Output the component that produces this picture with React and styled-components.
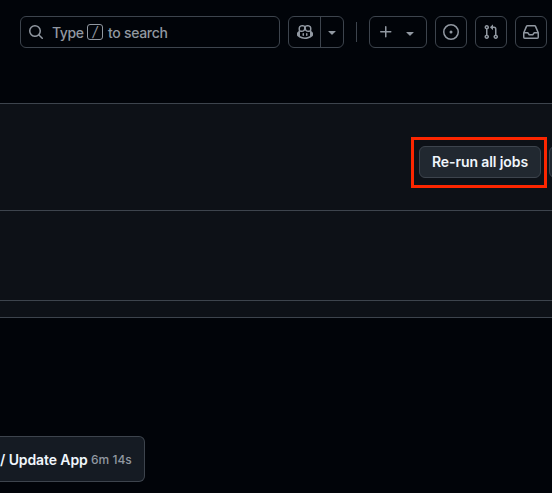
import React from "react";
import styled, { createGlobalStyle } from "styled-components";

const GlobalStyle = createGlobalStyle`
  *, *::before, *::after { box-sizing: border-box; }
  body {
    margin: 0;
    background: #010409;
    color: #f0f6fc;
    font-family: Inter, "Liberation Sans", sans-serif;
    font-size: 14px;
    overflow: hidden;
  }
`;

const Page = styled.div`
  width: 552px;
  height: 493px;
  display: flex;
  flex-direction: column;
  overflow: hidden;
  background: #010409;
`;

const Header = styled.header`
  display: flex;
  align-items: flex-start;
  gap: 8px;
  height: 103px;
  flex: none;
  padding: 16px 0 0 20px;
  color: #9198a1;
`;

const Search = styled.div`
  display: flex;
  align-items: center;
  flex: none;
  width: 260px;
  height: 32px;
  padding-left: 7px;
  border: 1px solid #3d444d;
  border-radius: 6px;
  white-space: pre;
`;

const SearchText = styled.span`
  width: ${(p) => p.$width}px;
  margin-left: ${(p) => p.$gap}px;
  line-height: 20px;
  letter-spacing: ${(p) => p.$spacing}px;
  font-weight: 500;
  padding-top: 1px;
`;

const Key = styled.kbd`
  display: flex;
  align-items: center;
  justify-content: center;
  width: 16px;
  height: 16px;
  border: 1px solid #9198a1;
  border-radius: 3px;
  font: italic 14px/14px Inter, sans-serif;
`;

const Button = styled.div`
  display: flex;
  align-items: center;
  justify-content: center;
  flex: none;
  width: ${(p) => p.$width || 32}px;
  height: 32px;
  gap: ${(p) => p.$gap || 0}px;
  border: 1px solid #3d444d;
  border-radius: 6px;
`;

const Segment = styled.div`
  display: flex;
  align-items: center;
  justify-content: center;
  width: ${(p) => p.$width}px;
  height: 100%;
  & + & { border-left: 1px solid #3d444d; }
`;

const Divider = styled.div`
  width: 1px;
  height: 20px;
  margin: 6px 4px 0;
  background: #3d444d;
`;

const Icon = styled.svg`
  display: block;
  flex: none;
  width: 16px;
  height: 16px;
  fill: currentColor;
  margin-top: ${(p) => p.$drop || 0}px;
`;

const Toolbar = styled.section`
  display: flex;
  align-items: flex-start;
  flex: none;
  height: 107px;
  padding: 33px 0 0 411px;
  border-top: 1px solid #3d444d;
  background: #0d1117;
`;

const Highlight = styled.div`
  flex: none;
  width: 136px;
  height: 51px;
  padding: 6px 5px;
  border: 3px solid #fb2600;
`;

const Action = styled.button`
  display: block;
  flex: none;
  width: ${(p) => p.$width}px;
  height: 32px;
  margin: ${(p) => p.$margin || 0};
  padding: 0;
  border: 1px solid #3d444d;
  border-radius: 6px;
  background: #212830;
  color: #f0f6fc;
  font: 600 14px/30px Inter, sans-serif;
  letter-spacing: -0.1px;
  white-space: nowrap;
`;

const Summary = styled.section`
  flex: none;
  height: 90px;
  border-top: 1px solid #3d444d;
  background: #0d1117;
`;

const Strip = styled.div`
  flex: none;
  height: 18px;
  border: solid #3d444d;
  border-width: 1px 0;
  background: #0d1117;
`;

const Graph = styled.main`
  flex: 1;
  padding-top: 118px;
`;

const Job = styled.div`
  display: flex;
  align-items: center;
  width: 145px;
  height: 46px;
  padding-top: 1px;
  border: 1px solid #3d444d;
  border-left: 0;
  border-radius: 0 6px 6px 0;
  background: #151b23;
  white-space: nowrap;
`;

const JobName = styled.span`
  width: 91px;
  font-weight: 600;
  letter-spacing: -0.1px;
`;

const Duration = styled.span`
  color: #9198a1;
  font-size: 12px;
  font-weight: 500;
`;

const shapes = {
  search: "M10.68 11.74a6 6 0 0 1-7.922-8.982 6 6 0 0 1 8.982 7.922l3.04 3.04a.749.749 0 0 1-.326 1.275.749.749 0 0 1-.734-.215ZM11.5 7a4.499 4.499 0 1 0-8.997 0A4.499 4.499 0 0 0 11.5 7Z",
  copilot: "M7.998 15.035c-4.562 0-7.873-2.914-7.998-3.749V9.338c.085-.628.677-1.686 1.588-2.065.013-.07.024-.143.036-.218.029-.183.06-.384.126-.612-.201-.508-.254-1.084-.254-1.656 0-.87.128-1.769.693-2.484.579-.733 1.494-1.124 2.724-1.261 1.206-.134 2.262.034 2.944.765.05.053.096.108.139.165.044-.057.094-.112.143-.165.682-.731 1.738-.899 2.944-.765 1.23.137 2.145.528 2.724 1.261.566.715.693 1.614.693 2.484 0 .572-.053 1.148-.254 1.656.066.228.098.429.126.612.012.076.024.148.037.218.924.385 1.522 1.471 1.591 2.095v1.872c0 .766-3.351 3.795-8.002 3.795Zm0-1.485c2.28 0 4.584-1.11 5.002-1.433V7.862l-.023-.116c-.49.21-1.075.291-1.727.291-1.146 0-2.059-.327-2.71-.991A3.222 3.222 0 0 1 8 6.303a3.24 3.24 0 0 1-.544.743c-.65.664-1.563.991-2.71.991-.652 0-1.236-.081-1.727-.291l-.023.116v4.255c.419.323 2.722 1.433 5.002 1.433ZM6.762 2.83c-.193-.206-.637-.413-1.682-.297-1.019.113-1.479.404-1.713.7-.247.312-.369.789-.369 1.554 0 .793.129 1.171.308 1.371.162.181.519.379 1.442.379.853 0 1.339-.235 1.638-.54.315-.322.527-.827.617-1.553.117-.935-.037-1.395-.241-1.614Zm4.155-.297c-1.044-.116-1.488.091-1.681.297-.204.219-.359.679-.242 1.614.091.726.303 1.231.618 1.553.299.305.784.54 1.638.54.922 0 1.28-.198 1.442-.379.179-.2.308-.578.308-1.371 0-.765-.123-1.242-.37-1.554-.233-.296-.693-.587-1.713-.7ZM6.25 9.037a.75.75 0 0 1 .75.75v1.501a.75.75 0 0 1-1.5 0V9.787a.75.75 0 0 1 .75-.75Zm4.25.75v1.501a.75.75 0 0 1-1.5 0V9.787a.75.75 0 0 1 1.5 0Z",
  caret: "m4.427 7.427 3.396 3.396a.25.25 0 0 0 .354 0l3.396-3.396A.25.25 0 0 0 11.396 7H4.604a.25.25 0 0 0-.177.427Z",
  plus: "M7.75 2a.75.75 0 0 1 .75.75V7h4.25a.75.75 0 0 1 0 1.5H8.5v4.25a.75.75 0 0 1-1.5 0V8.5H2.75a.75.75 0 0 1 0-1.5H7V2.75A.75.75 0 0 1 7.75 2Z",
  issue: "M8 9.5a1.5 1.5 0 1 0 0-3 1.5 1.5 0 0 0 0 3ZM8 0a8 8 0 1 1 0 16A8 8 0 0 1 8 0ZM1.5 8a6.5 6.5 0 1 0 13 0 6.5 6.5 0 0 0-13 0Z",
  pull: "M1.5 3.25a2.25 2.25 0 1 1 3 2.122v5.256a2.251 2.251 0 1 1-1.5 0V5.372A2.25 2.25 0 0 1 1.5 3.25Zm5.677-.177L9.573.677A.25.25 0 0 1 10 .854V2.5h1A2.5 2.5 0 0 1 13.5 5v5.628a2.251 2.251 0 1 1-1.5 0V5a1 1 0 0 0-1-1h-1v1.646a.25.25 0 0 1-.427.177L7.177 3.427a.25.25 0 0 1 0-.354ZM3.75 2.5a.75.75 0 1 0 0 1.5.75.75 0 0 0 0-1.5Zm0 9.5a.75.75 0 1 0 0 1.5.75.75 0 0 0 0-1.5Zm8.25.75a.75.75 0 1 0 1.5 0 .75.75 0 0 0-1.5 0Z",
  inbox: "M2.8 2.06A1.75 1.75 0 0 1 4.41 1h7.18c.7 0 1.333.417 1.61 1.06l2.74 6.395c.04.093.06.194.06.295v4.5A1.75 1.75 0 0 1 14.25 15H1.75A1.75 1.75 0 0 1 0 13.25v-4.5c0-.101.02-.202.06-.295Zm1.61.44a.25.25 0 0 0-.23.152L1.887 8H4.75a.75.75 0 0 1 .6.3L6.625 10h2.75l1.275-1.7a.75.75 0 0 1 .6-.3h2.863L11.82 2.652a.25.25 0 0 0-.23-.152Zm10.09 7h-2.875l-1.275 1.7a.75.75 0 0 1-.6.3h-3.5a.75.75 0 0 1-.6-.3L4.375 9.5H1.5v3.75c0 .138.112.25.25.25h12.5a.25.25 0 0 0 .25-.25Z",
};

function Glyph({ name, drop }) {
  return (
    <Icon viewBox="0 0 16 16" $drop={drop} aria-hidden="true">
      <path fillRule="evenodd" d={shapes[name]} />
    </Icon>
  );
}

export default function App() {
  return (
    <Page>
      <GlobalStyle />
      <Header>
        <Search>
          <Glyph name="search" />
          <SearchText $width={35} $gap={8} $spacing={-0.4}>Type</SearchText>
          <Key>/</Key>
          <SearchText $width={80} $gap={5} $spacing={-0.3}>to search</SearchText>
        </Search>
        <Button $width={56}>
          <Segment $width={31}><Glyph name="copilot" /></Segment>
          <Segment $width={23}><Glyph name="caret" /></Segment>
        </Button>
        <Divider />
        <Button $width={58} $gap={8}>
          <Glyph name="plus" />
          <Glyph name="caret" drop={2} />
        </Button>
        <Button><Glyph name="issue" /></Button>
        <Button><Glyph name="pull" /></Button>
        <Button><Glyph name="inbox" /></Button>
      </Header>
      <Toolbar>
        <Highlight>
          <Action $width={122}>Re-run all jobs</Action>
        </Highlight>
        <Action $width={32} $margin="9px 0 0 2px" aria-label="More actions" />
      </Toolbar>
      <Summary />
      <Strip />
      <Graph>
        <Job>
          <JobName>/ Update App</JobName>
          <Duration>6m 14s</Duration>
        </Job>
      </Graph>
    </Page>
  );
}
